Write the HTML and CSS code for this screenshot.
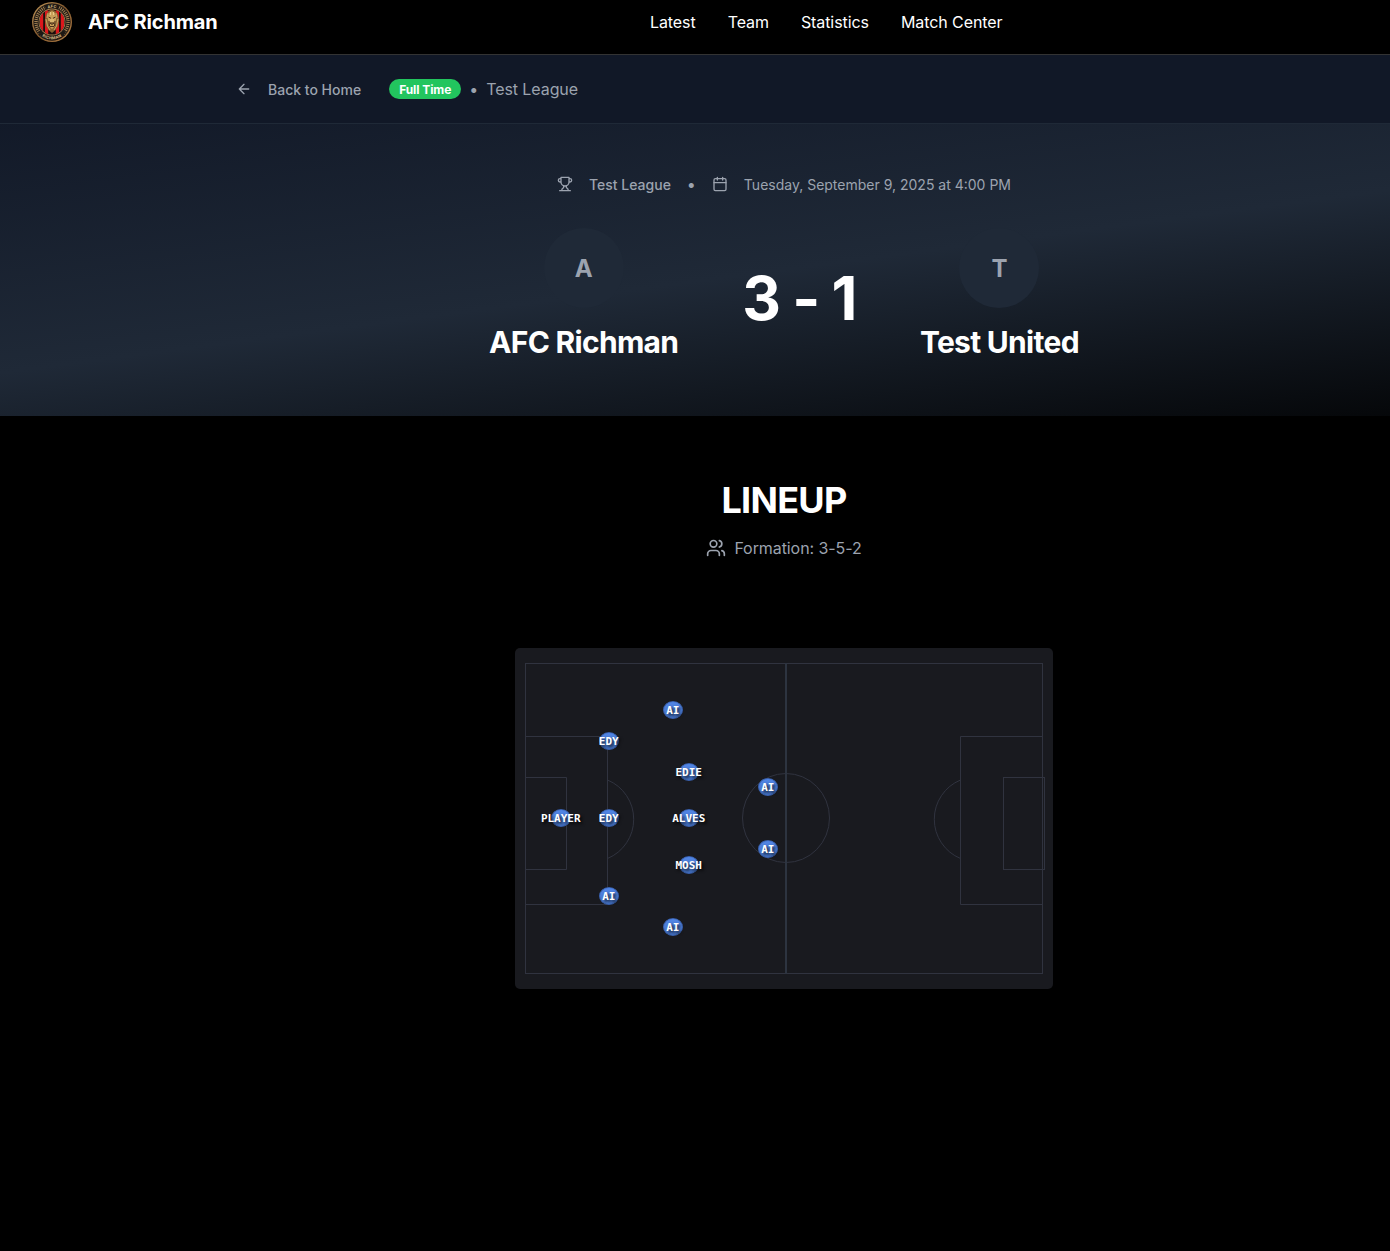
FILE: index.html
```html
<!DOCTYPE html>
<html lang="en">
<head>
<meta charset="utf-8">
<title>AFC Richman – Match Center</title>
<link rel="stylesheet" href="styles.css">
</head>
<body>
<div class="page">
  <header class="header">
    <a class="brand">
      <svg class="crest" viewBox="0 0 40 40">
        <defs>
          <linearGradient id="gold" x1="0" y1="0" x2="1" y2="1"><stop offset="0" stop-color="#c39a5c"/><stop offset=".5" stop-color="#80562c"/><stop offset="1" stop-color="#b98449"/></linearGradient>
          <clipPath id="field"><circle cx="20" cy="20" r="12.6"/></clipPath>
          <path id="arcTop" d="M5.8 20a14.2 14.2 0 0 1 28.4 0"/>
          <path id="arcBottom" d="M2.600 20a17.400 17.400 0 0 0 34.800 0"/>
        </defs>
        <circle cx="20" cy="20" r="20" fill="url(#gold)"/>
        <circle cx="20" cy="20" r="18.6" fill="#1d1814"/>
        <circle cx="20" cy="20" r="16" fill="none" stroke="#b8935c" stroke-width="3.400" stroke-dasharray="1 1" opacity=".85"/>
        <path d="M12.500 3.300Q20 0 27.500 3.300L26 7.500Q20 5 14 7.500zM6 30Q11 38.500 20 38.500T34 30L31 28Q20 39 9 28z" fill="#1d1814"/>
        <circle cx="20" cy="20" r="13.4" fill="#a98654"/>
        <g clip-path="url(#field)">
          <path fill="#1c0f0d" d="M7 7h26v26H7z"/>
          <path fill="#dc171c" d="M8 7h3.200v26H8zM13 7h3.200v26H13zM23.800 7H27v26h-3.200zM28.800 7H32v26h-3.200z"/>
        </g>
        <path fill="#8a6130" d="M20 7.500l3.500 1.500 2.500 4 1.200 5-1.200 6-2.500 4-3.500 3-3.500-3-2.500-4-1.200-6L14 13l2.500-4z"/>
        <path fill="#c9a05a" d="M20 9l3 2 1.500 4-1 5-1.500 5-2 2-2-2-1.500-5-1-5L17 11z"/>
        <path d="M14 17l1.500 7 2.500 4M26 17l-1.500 7L22 28M16 11l-1 5M24 11l1 5" fill="none" stroke="#d9b56e" stroke-width=".8"/>
        <path d="M18.500 10v3M21.500 10v3M19 17v3M21 17v3" fill="none" stroke="#f0d795" stroke-width=".8"/>
        <path d="M16.500 15l2.500 1.300M23.500 15L21 16.300M18 21h4l-2 1.500zM18 24.500h4M17 19l.5 5M23 19l-.5 5" fill="none" stroke="#3c2414" stroke-width=".9"/>
        <text class="crest-text"><textPath href="#arcTop" startOffset="50%">AFC</textPath></text>
        <text class="crest-text"><textPath href="#arcBottom" startOffset="50%">RICHMAN</textPath></text>
      </svg>
      <span class="brand-name">AFC Richman</span>
    </a>
    <nav class="nav"><a>Latest</a><a>Team</a><a>Statistics</a><a>Match Center</a></nav>
  </header>

  <div class="subheader">
    <div class="container">
      <a class="back">
        <svg class="icon" viewBox="0 0 24 24"><path d="m12 19-7-7 7-7M19 12H5"/></svg>
        <span class="back-label">Back to Home</span>
      </a>
      <div class="status"><span class="badge">Full Time</span><span>•</span><span>Test League</span></div>
    </div>
  </div>

  <section class="hero">
    <div class="meta">
      <svg class="icon" viewBox="0 0 24 24"><path d="M6 9H4.5a2.5 2.5 0 0 1 0-5H6M18 9h1.500a2.500 2.500 0 0 0 0-5H18M4 22h16M10 14.660V17c0 .55-.47.98-.97 1.210C7.850 18.750 7 20.240 7 22M14 14.660V17c0 .55.47.98.97 1.210C16.150 18.750 17 20.240 17 22M18 2H6v7a6 6 0 0 0 12 0V2Z"/></svg>
      <span class="meta-text medium">Test League</span>
      <span class="bullet">•</span>
      <svg class="icon" viewBox="0 0 24 24"><path d="M8 2v4M16 2v4M3 10h18"/><rect width="18" height="18" x="3" y="4" rx="2"/></svg>
      <span class="meta-text">Tuesday, September 9, 2025 at 4:00 PM</span>
    </div>
    <div class="score-row">
      <div class="team"><div class="avatar">A</div><h2 class="team-name">AFC Richman</h2></div>
      <div class="score">3 - 1</div>
      <div class="team"><div class="avatar">T</div><h2 class="team-name">Test United</h2></div>
    </div>
  </section>

  <main class="lineup">
    <h1 class="lineup-title">LINEUP</h1>
    <div class="formation">
      <svg class="icon icon-lg" viewBox="0 0 24 24"><path d="M16 21v-2a4 4 0 0 0-4-4H6a4 4 0 0 0-4 4v2M22 21v-2a4 4 0 0 0-3-3.870M16 3.130a4 4 0 0 1 0 7.750"/><circle cx="9" cy="7" r="4"/></svg>
      <span>Formation: 3-5-2</span>
    </div>
    <div class="pitch">
      <svg class="markings" viewBox="0 0 538 341">
        <rect x="10.500" y="15.500" width="517" height="310"/>
        <path d="M10.500 88.500h82v168h-82M10.500 129.500h41v92h-41M527.500 88.500h-82v168h82"/>
        <rect x="488.500" y="129.500" width="41" height="92"/>
        <path d="M92.500 132a42.500 42.500 0 0 1 0 78.500M445.500 132a42.500 42.500 0 0 0 0 78.500"/>
        <ellipse cx="271" cy="170" rx="43.500" ry="44.500"/>
        <path class="halfway" d="M271 15v311"/>
      </svg>
      <div class="player" style="left:46px;top:170px"><span>PLAYER</span></div>
      <div class="player" style="left:94px;top:93px"><span>EDY</span></div>
      <div class="player" style="left:94px;top:170px"><span>EDY</span></div>
      <div class="player" style="left:94px;top:248px"><span>AI</span></div>
      <div class="player" style="left:158px;top:62px"><span>AI</span></div>
      <div class="player" style="left:174px;top:124px"><span>EDIE</span></div>
      <div class="player" style="left:174px;top:170px"><span>ALVES</span></div>
      <div class="player" style="left:174px;top:217px"><span>MOSH</span></div>
      <div class="player" style="left:158px;top:279px"><span>AI</span></div>
      <div class="player" style="left:253px;top:139px"><span>AI</span></div>
      <div class="player" style="left:253px;top:201px"><span>AI</span></div>
    </div>
  </main>
</div>
</body>
</html>
```
FILE: styles.css
```css
* { box-sizing: border-box; margin: 0; }
html, body { height: 1251px; overflow: hidden; background: #000; }
body { font: 16px/24px Inter, sans-serif; letter-spacing: -0.08px; color: #9ca3af; }
.page { width: 1568px; }

.header {
  display: grid;
  grid-template-columns: 618px auto;
  align-items: center;
  height: 55px;
  padding: 0 32px 10px;
  background: #000;
  border-bottom: 1px solid #333;
  color: #fff;
}
.brand { display: flex; align-items: center; gap: 16px; }
.brand-name { font-size: 20px; line-height: 28px; font-weight: 700; letter-spacing: -0.16px; }
.crest { width: 40px; height: 40px; }
.crest-text { font: 700 4px Inter, sans-serif; letter-spacing: 0.2px; fill: #d9bd88; text-anchor: middle; }
.nav { display: flex; gap: 32px; }

.subheader {
  height: 69px;
  background: #111827;
  border-bottom: 1px solid #1f2937;
}
.container {
  display: flex;
  align-items: center;
  gap: 16px;
  width: 1152px;
  height: 68px;
  margin: 0 auto;
  padding: 0 16px;
}
.back {
  display: flex;
  align-items: center;
  gap: 16px;
  padding: 0 12px;
  font-size: 14px;
  line-height: 20px;
  font-weight: 500;
  letter-spacing: 0;
}
.back-label { padding-top: 2px; }
.status { display: flex; align-items: center; gap: 8px; }
.badge {
  padding: 3px 10px 1px;
  border-radius: 10px;
  background: #22c55e;
  color: #fff;
  font-size: 12px;
  line-height: 16px;
  font-weight: 700;
}
.icon {
  width: 16px;
  height: 16px;
  fill: none;
  stroke: currentColor;
  stroke-width: 2;
  stroke-linecap: round;
  stroke-linejoin: round;
}
.icon-lg { width: 20px; height: 20px; }

.hero {
  height: 292px;
  padding-top: 48px;
  background: linear-gradient(172.5deg, #111827 -5%, #1f2937 50%, #000 105%);
}
.meta {
  display: flex;
  justify-content: center;
  align-items: center;
  gap: 16px;
  height: 24px;
  font-size: 14px;
  letter-spacing: 0;
}
.meta-text { padding-top: 2px; }
.bullet { font-size: 16px; }
.medium { font-weight: 500; }
.score-row {
  display: flex;
  justify-content: center;
  align-items: center;
  gap: 64px;
  margin-top: 32px;
}
.team { display: flex; flex-direction: column; align-items: center; height: 140px; }
.avatar {
  display: grid;
  place-items: center;
  width: 80px;
  height: 80px;
  margin-bottom: 16px;
  padding-top: 2px;
  border-radius: 50%;
  background: #1f2937;
  font-size: 24px;
  font-weight: 700;
}
.team-name { font-size: 30px; line-height: 36px; letter-spacing: -0.7px; color: #fff; }
.score { font-size: 60px; line-height: 60px; font-weight: 700; letter-spacing: -1.5px; color: #fff; }

.lineup { display: flex; flex-direction: column; align-items: center; padding-top: 64px; }
.lineup-title { font-size: 36px; line-height: 40px; letter-spacing: -0.75px; color: #fff; }
.formation { display: flex; align-items: center; gap: 8px; margin-top: 16px; }

.pitch {
  position: relative;
  width: 538px;
  height: 341px;
  margin-top: 88px;
  border-radius: 5px;
  background: #191a1f;
}
.markings { display: block; width: 538px; height: 341px; fill: none; stroke: #30333f; }
.halfway { stroke: #2d3440; stroke-width: 2; }
.player {
  position: absolute;
  display: flex;
  justify-content: center;
  align-items: center;
  width: 20px;
  height: 18px;
  padding: 2px 0.5px 0 0;
  transform: translate(-50%, -50%);
  border: 1px solid #3a62b0;
  border-radius: 50%;
  background: linear-gradient(#5286e6, #4472c4);
  color: #fff;
  font: 700 11px/14px "DejaVu Sans Mono", monospace;
  letter-spacing: 0;
  text-shadow: 2px 2px 3px rgba(0, 0, 0, 0.8);
}
```
